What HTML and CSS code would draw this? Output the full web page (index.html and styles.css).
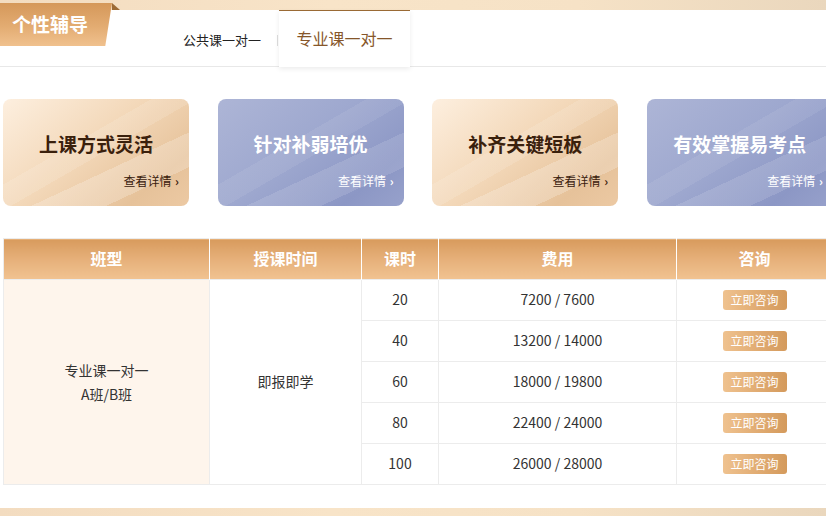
FILE: index.html
```html
<!DOCTYPE html>
<html lang="zh-CN">
<head>
<meta charset="utf-8">
<title>个性辅导</title>
<link rel="stylesheet" href="styles.css">
</head>
<body>
<div class="page">
  <div class="panel">
    <div class="badge"><span class="badge-text">个性辅导</span><span class="fold"></span></div>
    <nav class="tabs">
      <a class="tab">公共课一对一</a>
      <span class="sep"></span>
      <a class="tab active">专业课一对一</a>
    </nav>
    <div class="cards">
      <div class="card gold"><div class="card-title">上课方式灵活</div><div class="more">查看详情 <span class="arr">›</span></div></div>
      <div class="card blue"><div class="card-title">针对补弱培优</div><div class="more">查看详情 <span class="arr">›</span></div></div>
      <div class="card gold"><div class="card-title">补齐关键短板</div><div class="more">查看详情 <span class="arr">›</span></div></div>
      <div class="card blue"><div class="card-title">有效掌握易考点</div><div class="more">查看详情 <span class="arr">›</span></div></div>
    </div>
    <table class="price">
      <thead>
        <tr><th class="c1">班型</th><th class="c2">授课时间</th><th class="c3">课时</th><th class="c4">费用</th><th class="c5">咨询</th></tr>
      </thead>
      <tbody>
        <tr><td class="type" rowspan="5">专业课一对一<br>A班/B班</td><td rowspan="5">即报即学</td><td>20</td><td>7200 / 7600</td><td><span class="btn">立即咨询</span></td></tr>
        <tr><td>40</td><td>13200 / 14000</td><td><span class="btn">立即咨询</span></td></tr>
        <tr><td>60</td><td>18000 / 19800</td><td><span class="btn">立即咨询</span></td></tr>
        <tr><td>80</td><td>22400 / 24000</td><td><span class="btn">立即咨询</span></td></tr>
        <tr><td>100</td><td>26000 / 28000</td><td><span class="btn">立即咨询</span></td></tr>
      </tbody>
    </table>
  </div>
</div>
</body>
</html>
```

FILE: styles.css
```css
* { box-sizing: border-box; }
html, body { margin: 0; padding: 0; }
body {
  width: 826px;
  height: 516px;
  overflow: hidden;
  font-family: "Noto Sans CJK SC", "Noto Sans", sans-serif;
  color: #333;
  background: linear-gradient(90deg, #f3dcc0 0%, #f8e4c8 40%, #f6e2c6 70%, #ead7bd 100%);
}
.page {
  padding: 10px 0 8px 0;
  height: 516px;
}
.panel {
  position: relative;
  background: #fff;
  height: 498px;
  width: 826px;
}
.badge {
  position: absolute;
  left: 0;
  top: -7px;
  width: 120px;
  height: 44px;
}
.badge::before {
  content: "";
  position: absolute;
  left: 0; top: 0;
  width: 112px; height: 43px;
  background: linear-gradient(180deg, #d5985a 0%, #e3ac72 55%, #f0c18e 100%);
  clip-path: polygon(0 0, 100% 0, 94% 100%, 0 100%);
  border-bottom-right-radius: 6px;
  box-shadow: 0 2px 4px rgba(200,150,100,.4);
}
.fold {
  position: absolute;
  left: 112px; top: 0;
  width: 0; height: 0;
  border-bottom: 7px solid #9c6a35;
  border-right: 8px solid transparent;
}
.badge-text {
  position: relative;
  display: block;
  padding: 8px 0 0 12px;
  font-size: 19px;
  font-weight: 700;
  line-height: 26px;
  color: #fff;
}
.tabs {
  display: flex;
  align-items: stretch;
  height: 57px;
  padding-left: 183px;
  border-bottom: 1px solid #e8e8e8;
}
.tab {
  display: flex;
  align-items: center;
  font-size: 13px;
  color: #222;
  padding-top: 2px;
}
.sep {
  width: 1px;
  height: 11px;
  background: #ddd;
  align-self: center;
  margin: 4px 0 0 16px;
}
.tab.active {
  width: 131px;
  margin-left: 1px;
  justify-content: center;
  font-size: 16px;
  color: #86562a;
  border-top: 1px solid #9a6a35;
  box-shadow: 0 2px 5px rgba(0,0,0,.08);
  background: #fff;
  padding-top: 0;
  padding-bottom: 2px;
  margin-bottom: -1px;
}
.cards {
  display: flex;
  gap: 28.6px;
  padding: 32px 0 0 3px;
}
.card {
  flex: 0 0 186px;
  height: 107px;
  border-radius: 8px;
  display: flex;
  flex-direction: column;
  align-items: center;
  position: relative;
  overflow: hidden;
}
.card.gold {
  background:
    linear-gradient(155deg, rgba(255,255,255,0) 62%, rgba(255,255,255,.22) 62%, rgba(255,255,255,.22) 80%, rgba(255,255,255,0) 80%),
    linear-gradient(150deg, rgba(255,255,255,0) 40%, rgba(255,255,255,.12) 40%, rgba(255,255,255,.12) 52%, rgba(255,255,255,0) 52%),
    linear-gradient(140deg, #fdefdf 0%, #f3d8b9 45%, #e6c29a 80%, #ecc9a3 100%);
  color: #3a200c;
}
.card.blue {
  background:
    linear-gradient(155deg, rgba(255,255,255,0) 62%, rgba(255,255,255,.12) 62%, rgba(255,255,255,.12) 80%, rgba(255,255,255,0) 80%),
    linear-gradient(150deg, rgba(255,255,255,0) 40%, rgba(255,255,255,.07) 40%, rgba(255,255,255,.07) 52%, rgba(255,255,255,0) 52%),
    linear-gradient(140deg, #adb5d6 0%, #9ea8cf 45%, #8c97c5 80%, #97a1cb 100%);
  color: #fff;
}
.card-title {
  margin-top: 33px;
  font-size: 19px;
  font-weight: 700;
  line-height: 24px;
}
.more {
  align-self: flex-end;
  margin: 17px 10px 0 0;
  font-size: 12px;
  line-height: 16px;
}
.arr { font-weight: 700; margin-left: 1px; }
.price {
  margin: 32px 0 0 3px;
  width: 829px;
  border-collapse: collapse;
  table-layout: fixed;
  font-size: 14px;
}
.price th {
  height: 41px;
  color: #fff;
  font-size: 16px;
  font-weight: 700;
  background: linear-gradient(180deg, #d89b5d 0%, #e6b07a 50%, #f1c391 100%);
  border: 1px solid #fff;
  border-top: 1px solid #ececec;
  border-bottom: none;
  padding: 0 0 2px 0;
}
.price th.c1 { border-left: 1px solid #ececec; }
.c1 { width: 206px; }
.c2 { width: 152px; }
.c3 { width: 77px; }
.c4 { width: 238px; }
.c5 { width: 156px; }
.price td {
  height: 41px;
  text-align: center;
  border: 1px solid #ececec;
  padding: 0 0 2px 0;
  color: #333;
}
.price td.type {
  background: #fef5ec;
  line-height: 24px;
  padding-top: 2px;
}
.btn {
  display: inline-block;
  width: 64px;
  height: 20px;
  line-height: 20px;
  border-radius: 3px;
  font-size: 12px;
  color: #fff;
  background: linear-gradient(90deg, #efc28f 0%, #e2ad74 50%, #d49a5c 100%);
  vertical-align: middle;
}
```
